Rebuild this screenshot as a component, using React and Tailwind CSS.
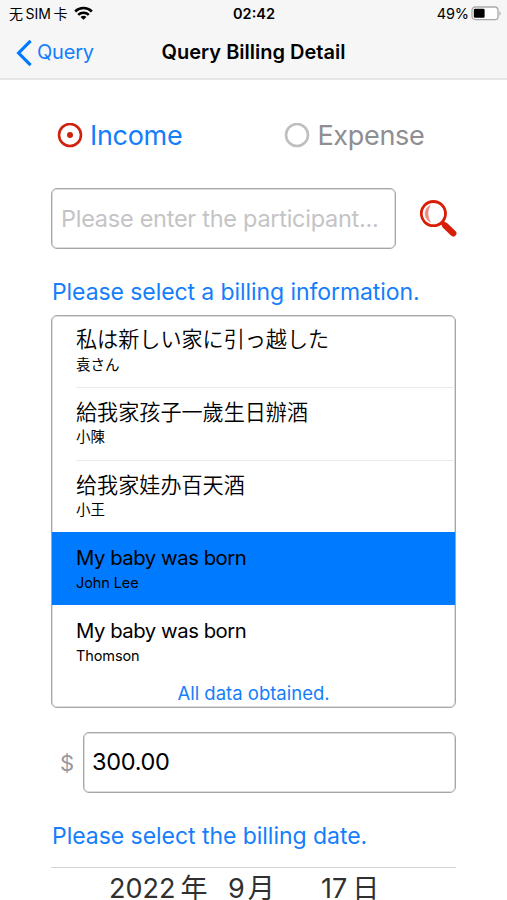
import { useState } from "react";

const bills = [
  { title: "私は新しい家に引っ越した", name: "袁さん", lang: "ja" },
  { title: "給我家孩子一歲生日辦酒", name: "小陳", lang: "zh-Hant" },
  { title: "给我家娃办百天酒", name: "小王", lang: "zh-Hans" },
  { title: "My baby was born", name: "John Lee", lang: "en" },
  { title: "My baby was born", name: "Thomson", lang: "en" },
];

const titleFonts = {
  ja: "text-[21.1px] font-['Inter','Noto_Sans_CJK_JP',sans-serif] font-[350]",
  "zh-Hant": "text-[21.1px] font-['Inter','Noto_Sans_CJK_TC',sans-serif] font-[350]",
  "zh-Hans": "text-[21.1px] font-['Inter','Noto_Sans_CJK_SC',sans-serif] font-[350]",
  en: "text-[20.3px] font-['Inter',sans-serif] tracking-[-0.45px]",
};

const nameFonts = {
  ja: "font-['Inter','Noto_Sans_CJK_JP',sans-serif]",
  "zh-Hant": "font-['Inter','Noto_Sans_CJK_TC',sans-serif]",
  "zh-Hans": "font-['Inter','Noto_Sans_CJK_SC',sans-serif]",
  en: "font-['Inter',sans-serif] tracking-[-0.1px]",
};

function WifiIcon() {
  return (
    <svg width="19" height="15" viewBox="0 0 20 15" fill="none" stroke="#000" strokeWidth="2.7" aria-hidden="true">
      <path d="M1.2 5.4C6.2.6 13.8.6 18.8 5.4" />
      <path d="M4.4 8.9C7.6 5.9 12.4 5.9 15.6 8.9" />
      <path d="M10 14.2 6.9 11.2C8.7 9.5 11.3 9.5 13.1 11.2Z" fill="#000" stroke="none" />
    </svg>
  );
}

function BatteryIcon() {
  return (
    <svg width="31" height="15" viewBox="0 0 31 15" aria-hidden="true">
      <rect x="1" y="1" width="26" height="12.6" rx="3.2" fill="#fff" stroke="#a9a9a9" strokeWidth="1.3" />
      <rect x="2.8" y="2.8" width="10.8" height="9" rx="1.2" fill="#000" />
      <path d="M28.4 5.2c1.6.5 1.6 3.8 0 4.3z" fill="#a9a9a9" />
    </svg>
  );
}

function SearchIcon() {
  return (
    <svg width="38" height="38" viewBox="0 0 38 38" fill="none" stroke="#d81e06" aria-hidden="true">
      <circle cx="13.4" cy="13.6" r="12.1" strokeWidth="2.8" />
      <path d="M10.2 5.4C3.4 8.6 3.4 18.6 10.6 22.2C7.2 16.8 7.2 10.6 10.2 5.4Z" fill="#ee8a7e" stroke="#ee8a7e" strokeWidth="0.6" />
      <path d="M22 22.4 27 27.4" strokeWidth="4.6" />
      <path d="M25.4 25.8 33.2 33.2" strokeWidth="6.4" strokeLinecap="round" />
    </svg>
  );
}

function Radio({ checked, label, onClick }) {
  return (
    <button type="button" role="radio" aria-checked={checked} onClick={onClick} className="flex h-[40px] items-center gap-[7px]">
      <svg width="26" height="26" viewBox="0 0 26 26" aria-hidden="true">
        <circle cx="13" cy="12" r="11" fill="none" stroke={checked ? "#d0210f" : "#bfbfbf"} strokeWidth="2.6" />
        {checked ? <circle cx="13" cy="12" r="3" fill="#d0210f" /> : null}
      </svg>
      <span className={checked ? "text-[27px] leading-[40px] tracking-[-0.3px] text-[#147efb]" : "text-[27px] leading-[40px] tracking-[-0.3px] text-[#8e8e93]"}>
        {label}
      </span>
    </button>
  );
}

export default function App() {
  const [type, setType] = useState("income");
  const [selected, setSelected] = useState(3);

  return (
    <div className="h-[900px] w-[507px] overflow-hidden bg-white font-['Inter','Noto_Sans_CJK_SC',sans-serif] text-black">
      <header className="flex h-[80px] flex-col border-b-2 border-[#e6e6e6] bg-[#f6f6f6]">
        <div className="grid h-[27px] grid-cols-3 items-center pl-[9px] pr-[5px] text-[14.5px] leading-[27px]">
          <div className="flex items-center gap-[7px]">
            <span className="flex gap-[2.5px] text-[14px] whitespace-nowrap">
              <span>无</span>
              <span>SIM</span>
              <span>卡</span>
            </span>
            <WifiIcon />
          </div>
          <span className="pr-[3px] text-center font-semibold">02:42</span>
          <div className="flex items-center justify-end gap-[2px]">
            <span className="tracking-[-0.1px]">49%</span>
            <BatteryIcon />
          </div>
        </div>
        <div className="grid h-[51px] grid-cols-[110px_1fr_110px] items-center">
          <button type="button" className="flex items-center gap-[4px] pl-[16px] text-[20px] leading-[51px] tracking-[-0.2px] text-[#147efb]">
            <svg width="17" height="28" viewBox="0 0 17 28" fill="none" stroke="#007aff" strokeWidth="3.2" aria-hidden="true">
              <path d="M14.6 1.8 2.6 14 14.6 26.2" />
            </svg>
            Query
          </button>
          <h1 className="text-center text-[20px] leading-[51px] font-semibold whitespace-nowrap">Query Billing Detail</h1>
        </div>
      </header>

      <main className="flex flex-col px-[51px]">
        <div role="radiogroup" className="mt-[36px] flex h-[40px] gap-[102px] pl-[6px]">
          <Radio checked={type === "income"} label="Income" onClick={() => setType("income")} />
          <Radio checked={type === "expense"} label="Expense" onClick={() => setType("expense")} />
        </div>

        <div className="mt-[32px] flex h-[61px] items-center gap-[24px]">
          <div className="flex h-[61px] w-[345px] shrink-0 items-center rounded-[6px] border border-[#a6a6a6] pl-[9px] text-[23.5px] tracking-[-0.27px] whitespace-nowrap text-[#c4c4c6] shadow-[inset_0_0_0_1px_#dedede]">
            Please enter the participant...
          </div>
          <button type="button" aria-label="Search" className="shrink-0">
            <SearchIcon />
          </button>
        </div>

        <p className="mt-[27px] h-[32px] pl-px text-[23px] leading-[32px] tracking-[-0.08px] whitespace-nowrap text-[#147efb]">
          Please select a billing information.
        </p>

        <ul className="mt-[7px] flex h-[393px] flex-col overflow-hidden rounded-[6px] border border-[#a6a6a6] shadow-[inset_0_0_0_1px_#dedede]">
          {bills.map((bill, i) => (
            <li
              key={i}
              onClick={() => setSelected(i)}
              className={
                i === selected
                  ? "h-[72.75px] shrink-0 bg-[#007aff] pl-[24px] first:-mt-[2px]"
                  : "h-[72.75px] shrink-0 pl-[24px] first:-mt-[2px]"
              }
            >
              <div
                className={
                  i > 0 && i !== selected && i !== selected + 1
                    ? "flex h-full flex-col border-t border-[#e9e9eb] pt-[9px]"
                    : "flex h-full flex-col pt-[10px]"
                }
              >
                <span lang={bill.lang} className={`h-[30.5px] leading-[32px] ${titleFonts[bill.lang]}`}>{bill.title}</span>
                <span lang={bill.lang} className={`h-[20px] text-[14.5px] leading-[20px] ${nameFonts[bill.lang]}`}>{bill.name}</span>
              </div>
            </li>
          ))}
          <li className="h-[28px] text-center text-[18.5px] leading-[30px] text-[#147efb]">All data obtained.</li>
        </ul>

        <div className="mt-[24px] flex h-[61px] items-center">
          <span className="w-[32px] pt-px pl-[9px] text-[22px] text-[#98989c]">$</span>
          <div className="flex h-[61px] flex-1 items-center rounded-[6px] border border-[#a6a6a6] pb-[2px] pl-[8px] text-[23.5px] tracking-[-0.3px] shadow-[inset_0_0_0_1px_#dedede]">
            300.00
          </div>
        </div>

        <p className="mt-[27px] h-[32px] pl-px text-[23px] leading-[32px] tracking-[-0.04px] whitespace-nowrap text-[#147efb]">
          Please select the billing date.
        </p>

        <div className="mt-[15px] flex h-[33px] border-t border-[#d4d4d6] pl-[58px] text-[27px] leading-[42px] text-[#303030]">
          <div className="flex w-[119px] gap-[5px]">
            <span>2022</span>
            <span>年</span>
          </div>
          <div className="flex w-[93px] gap-[3px]">
            <span>9</span>
            <span>月</span>
          </div>
          <div className="flex gap-[5px]">
            <span>17</span>
            <span>日</span>
          </div>
        </div>
      </main>
    </div>
  );
}
